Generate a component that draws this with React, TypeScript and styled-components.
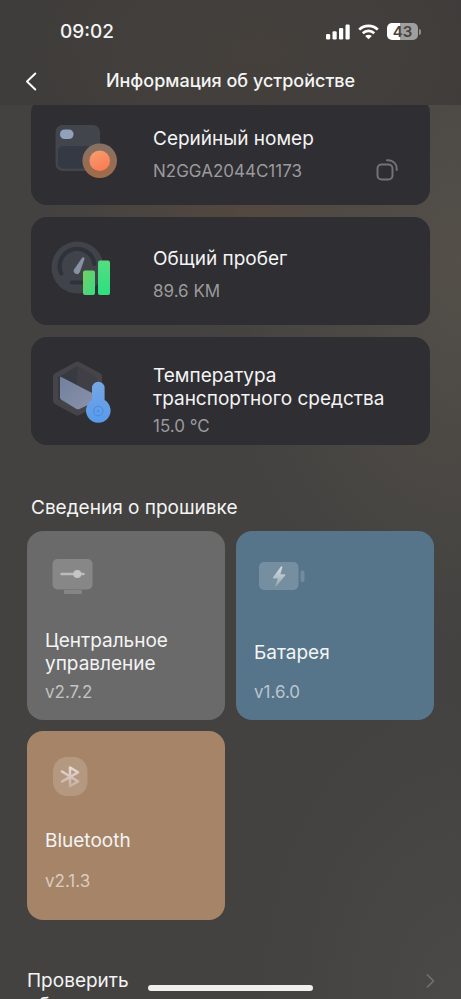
import React from "react";
import styled, { createGlobalStyle } from "styled-components";

const GlobalStyle = createGlobalStyle`
  *, *::before, *::after { box-sizing: border-box; }
  body { margin: 0; background: #434240; }
  button { font: inherit; color: inherit; background: none; border: 0; padding: 0; cursor: pointer; }
`;

const Screen = styled.div`
  position: relative;
  display: flex;
  flex-direction: column;
  height: 100vh;
  overflow: hidden;
  color: #f4f4f4;
  font-family: Inter, "Noto Sans", sans-serif;
  background:
    radial-gradient(ellipse 240px 380px at 100% 26%, #544f49 0%, rgba(84, 79, 73, 0) 100%),
    radial-gradient(ellipse 200px 130px at 55% 21%, #54483f 0%, rgba(84, 72, 63, 0) 100%),
    radial-gradient(ellipse 200px 300px at 100% 100%, #4a4947 0%, rgba(74, 73, 71, 0) 100%),
    #434240;
`;

const Header = styled.header`
  flex: none;
  padding-bottom: 4px;
  background: radial-gradient(ellipse 240px 140px at 56% 50%, #45403c 0%, #3f3d3b 100%);
`;

const StatusBar = styled.div`
  display: flex;
  align-items: center;
  justify-content: space-between;
  padding: 16px 40px 14px 60px;
`;

const Clock = styled.time`
  font-size: 19px;
  line-height: 31px;
  font-weight: 500;
`;

const StatusIcons = styled.div`
  display: flex;
  align-items: center;
  gap: 8px;
`;

const BatteryLevel = styled.div`
  display: flex;
  align-items: center;
  gap: 1px;

  &::after {
    content: "";
    width: 2px;
    height: 6px;
    border-radius: 0 2px 2px 0;
    background: #8f8e8c;
  }
`;

const BatteryBody = styled.span`
  width: 31px;
  border-radius: 5px;
  background: linear-gradient(90deg, #ffffff 43%, #a09f9d 43%);
  color: #454341;
  font-size: 15px;
  line-height: 17px;
  font-weight: 600;
  text-align: center;
`;

const NavBar = styled.nav`
  display: grid;
  grid-template-columns: 40px 1fr 40px;
  align-items: center;
  padding: 0 20px;
`;

const BackButton = styled.button`
  display: flex;
  height: 40px;
  align-items: center;
  padding-left: 5px;
`;

const PageTitle = styled.h1`
  margin: 0;
  font-size: 18px;
  line-height: 24px;
  font-weight: 500;
  text-align: center;
  white-space: nowrap;
`;

const Content = styled.main`
  flex: 1;
  min-height: 0;
  overflow-y: auto;
  scrollbar-width: none;
`;

const InfoList = styled.section`
  display: flex;
  flex-direction: column;
  gap: 12px;
  margin-top: -8px;
  padding: 0 31px;
`;

const InfoCard = styled.article`
  display: grid;
  grid-template-columns: 68px 1fr auto;
  column-gap: 34px;
  align-items: center;
  min-height: 108px;
  padding: 0 32px 0 20px;
  border-radius: 16px;
  background: #2f2e32;
`;

const InfoText = styled.div<{ $compact?: boolean }>`
  display: flex;
  flex-direction: column;
  gap: ${(p) => (p.$compact ? 4 : 9)}px;
  padding-top: ${(p) => (p.$compact ? 20 : 7)}px;
  white-space: nowrap;
`;

const InfoTitle = styled.h2`
  margin: 0;
  font-size: 19px;
  line-height: 23px;
  font-weight: 400;
`;

const InfoValue = styled.p`
  margin: 0;
  color: #9b9a9d;
  font-size: 17px;
  line-height: 24px;
`;

const CopyButton = styled.button`
  display: flex;
  padding-top: 37px;
`;

const SectionTitle = styled.h2`
  margin: 50px 31px 10px;
  font-size: 19px;
  line-height: 26px;
  font-weight: 400;
`;

const FirmwareGrid = styled.section`
  display: grid;
  grid-template-columns: 1fr 1fr;
  gap: 11px;
  padding: 0 27px;
`;

const FirmwareTile = styled.article<{ $color: string }>`
  display: flex;
  flex-direction: column;
  min-height: 189px;
  padding: 19px 18px 16px;
  border-radius: 16px;
  background: ${(p) => p.$color};
`;

const FirmwareName = styled.h3<{ $short?: boolean }>`
  display: flex;
  align-items: center;
  min-height: ${(p) => (p.$short ? 23 : 46)}px;
  margin: 27px 0 ${(p) => (p.$short ? 17 : 5)}px;
  font-size: 19px;
  line-height: 23px;
  font-weight: 400;
`;

const FirmwareVersion = styled.p`
  margin: 0;
  color: rgba(255, 255, 255, 0.6);
  font-size: 17px;
  line-height: 24px;
`;

const UpdateRow = styled.button`
  display: flex;
  width: 100%;
  align-items: flex-start;
  justify-content: space-between;
  padding: 49px 26px 40px 27px;
  font-size: 19px;
  line-height: 24px;
  text-align: left;

  span { width: 150px; }
  svg { margin-top: 5px; }
`;

const HomeIndicator = styled.div`
  position: absolute;
  bottom: 8px;
  left: 50%;
  width: 36%;
  height: 6px;
  border-radius: 3px;
  background: #f1efee;
  transform: translateX(-50%);
`;

const SignalIcon = () => (
  <svg width="24" height="16" viewBox="0 0 24 16" fill="#fff" aria-hidden="true">
    <rect x="0" y="10" width="4.2" height="5.5" rx="1.2" />
    <rect x="6.5" y="7.3" width="4.2" height="8.2" rx="1.2" />
    <rect x="13" y="4" width="4.2" height="11.5" rx="1.2" />
    <rect x="19.5" y="0.5" width="4.2" height="15" rx="1.2" />
  </svg>
);

const WifiIcon = () => (
  <svg width="21" height="16" viewBox="0 0 21 16" fill="none" stroke="#fff" strokeWidth="2.7" aria-hidden="true">
    <path d="M1.2 5.6a13.3 13.3 0 0 1 18.6 0" />
    <path d="M4.8 9.2a8.1 8.1 0 0 1 11.4 0" />
    <path d="M10.5 15.3 7.2 12a4.7 4.7 0 0 1 6.6 0Z" fill="#fff" stroke="none" />
  </svg>
);

const BackIcon = () => (
  <svg width="12" height="19" viewBox="0 0 12 19" fill="none" stroke="#fff" strokeWidth="1.9" strokeLinecap="round" strokeLinejoin="round" aria-hidden="true">
    <path d="M10.3 1.5 2 9.5l8.3 8" />
  </svg>
);

const SerialIcon = () => (
  <svg width="68" height="68" viewBox="0 0 68 68" aria-hidden="true">
    <defs>
      <linearGradient id="serialKnob" x1="0" y1="0" x2="0.4" y2="1">
        <stop offset="0" stopColor="#f5a070" />
        <stop offset="1" stopColor="#fb7d55" />
      </linearGradient>
      <linearGradient id="serialRing" x1="0" y1="0" x2="0" y2="1">
        <stop offset="0" stopColor="#857166" />
        <stop offset="1" stopColor="#a26b47" />
      </linearGradient>
    </defs>
    <rect x="4.5" y="8" width="44.5" height="46" rx="7" fill="#43454c" />
    <rect x="7" y="29" width="41" height="22.5" rx="5" fill="#343943" />
    <rect x="9" y="12.5" width="13.5" height="9.5" rx="4.5" fill="#91a0bb" />
    <circle cx="48.7" cy="43.7" r="17.3" fill="url(#serialRing)" />
    <circle cx="48.7" cy="43.7" r="10.3" fill="url(#serialKnob)" />
  </svg>
);

const MileageIcon = () => (
  <svg width="68" height="68" viewBox="0 0 68 68" aria-hidden="true">
    <defs>
      <linearGradient id="barShort" x1="0" y1="0" x2="1" y2="1">
        <stop offset="0" stopColor="#77ce63" />
        <stop offset="1" stopColor="#35dd83" />
      </linearGradient>
      <linearGradient id="barTall" x1="0" y1="0" x2="0" y2="1">
        <stop offset="0" stopColor="#55dc82" />
        <stop offset="1" stopColor="#2ce07e" />
      </linearGradient>
    </defs>
    <circle cx="26.5" cy="30.5" r="26" fill="#41434a" />
    <path d="M10.2 36.5A17.5 17.5 0 1 1 43.5 27M21 45.5h14" fill="none" stroke="#30323a" strokeWidth="4.2" strokeLinecap="round" />
    <path d="M31.3 20.6a1.4 1.4 0 0 1 2.2 1.3l-4.6 13.2a3.2 3.2 0 0 1-5.9-2.5Z" fill="#8890a3" />
    <rect x="32" y="33.5" width="12" height="24.5" rx="2" fill="url(#barShort)" />
    <rect x="47" y="23.5" width="12" height="34.5" rx="2" fill="url(#barTall)" />
  </svg>
);

const TemperatureIcon = () => (
  <svg width="68" height="68" viewBox="0 0 68 68" aria-hidden="true">
    <defs>
      <linearGradient id="boxFace" x1="0" y1="0" x2="1" y2="1">
        <stop offset="0" stopColor="#71819e" />
        <stop offset="1" stopColor="#8b91aa" />
      </linearGradient>
      <linearGradient id="thermo" x1="0" y1="0" x2="0" y2="1">
        <stop offset="0" stopColor="#77a6e4" />
        <stop offset="1" stopColor="#589aec" />
      </linearGradient>
    </defs>
    <path d="M26.5 8 47.5 19.3v24.5L26.5 55.2 5.5 43.8V19.3Z" fill="#444449" stroke="#444449" strokeWidth="7" strokeLinejoin="round" />
    <path d="M26.5 9v25L7 43.5v-23Z" fill="#383a42" />
    <path d="M26.5 9 46 20.5v22L26.5 34Z" fill="#3f3f45" />
    <path d="M9 20.8q0-1.5 1.3-.8L43 37v8L28.5 52q-1.5.7-3 0L10 42.5q-1-.8-1-2Z" fill="url(#boxFace)" />
    <path d="M41 31a6.3 6.3 0 0 1 12.6 0v12a12.3 12.3 0 1 1-12.6 0Z" fill="url(#thermo)" />
    <circle cx="47.3" cy="54" r="4.6" fill="none" stroke="#4c8fe0" strokeWidth="1.3" />
    <circle cx="47.3" cy="54" r="1.3" fill="#4c8fe0" />
  </svg>
);

const CopyIcon = () => (
  <svg width="22" height="22" viewBox="0 0 22 22" fill="none" stroke="#737276" strokeWidth="2" strokeLinecap="round" aria-hidden="true">
    <rect x="1.5" y="5.5" width="15" height="15" rx="4" />
    <path d="M11 1.2h1.5a8.2 8.2 0 0 1 8.2 8.2V11" />
  </svg>
);

const ControllerIcon = () => (
  <svg width="52" height="52" viewBox="0 0 52 52" aria-hidden="true">
    <rect x="7.5" y="9" width="40" height="30.5" rx="5" fill="#878787" />
    <rect x="19" y="40" width="18" height="4" rx="1" fill="#858585" />
    <path d="M16.5 24h22" stroke="#bcbcbc" strokeWidth="2.4" strokeLinecap="round" />
    <circle cx="32.3" cy="24" r="4" fill="#c5c5c5" />
  </svg>
);

const PowerIcon = () => (
  <svg width="52" height="52" viewBox="0 0 52 52" aria-hidden="true">
    <defs>
      <linearGradient id="bolt" x1="0" y1="0" x2="0" y2="1">
        <stop offset="0" stopColor="#d6dde1" />
        <stop offset="1" stopColor="#94a8b4" />
      </linearGradient>
    </defs>
    <rect x="5" y="12" width="39.5" height="28" rx="5" fill="#758fa0" />
    <rect x="46.5" y="20.5" width="4" height="11.5" rx="1.6" fill="#6f8b9e" />
    <path d="m27 16.5-8 10.8q-.5 1.2.7 1.2h4.1l-2.4 7.3q.6.7 1.3 0l8.4-10.3q.6-1.2-.7-1.3h-4l2-7.2q-.5-1-1.4-.5Z" fill="url(#bolt)" />
  </svg>
);

const BluetoothIcon = () => (
  <svg width="52" height="52" viewBox="0 0 52 52" fill="none" aria-hidden="true">
    <defs>
      <linearGradient id="rune" gradientUnits="userSpaceOnUse" x1="0" y1="17" x2="0" y2="37">
        <stop offset="0" stopColor="#e6dcd6" />
        <stop offset="1" stopColor="#c6ae9f" />
      </linearGradient>
    </defs>
    <rect x="8" y="7" width="34.5" height="39" rx="14" fill="#b4987f" />
    <path d="m17 21.5 16 10-8 4.8V17.5l8 4.8-16 9.4" stroke="url(#rune)" strokeWidth="2.5" strokeLinecap="round" strokeLinejoin="round" />
  </svg>
);

const ChevronIcon = () => (
  <svg width="9" height="14" viewBox="0 0 9 14" fill="none" stroke="#73716f" strokeWidth="1.7" strokeLinecap="round" strokeLinejoin="round" aria-hidden="true">
    <path d="m1.5 1 6 6-6 6" />
  </svg>
);

export default function App() {
  return (
    <Screen>
      <GlobalStyle />
      <Header>
        <StatusBar>
          <Clock>09:02</Clock>
          <StatusIcons>
            <SignalIcon />
            <WifiIcon />
            <BatteryLevel><BatteryBody>43</BatteryBody></BatteryLevel>
          </StatusIcons>
        </StatusBar>
        <NavBar>
          <BackButton aria-label="Назад"><BackIcon /></BackButton>
          <PageTitle>Информация об устройстве</PageTitle>
        </NavBar>
      </Header>
      <Content>
        <InfoList>
          <InfoCard>
            <SerialIcon />
            <InfoText>
              <InfoTitle>Серийный номер</InfoTitle>
              <InfoValue>N2GGA2044C1173</InfoValue>
            </InfoText>
            <CopyButton aria-label="Копировать"><CopyIcon /></CopyButton>
          </InfoCard>
          <InfoCard>
            <MileageIcon />
            <InfoText>
              <InfoTitle>Общий пробег</InfoTitle>
              <InfoValue>89.6 KM</InfoValue>
            </InfoText>
          </InfoCard>
          <InfoCard>
            <TemperatureIcon />
            <InfoText $compact>
              <InfoTitle>Температура<br />транспортного средства</InfoTitle>
              <InfoValue>15.0 °C</InfoValue>
            </InfoText>
          </InfoCard>
        </InfoList>
        <SectionTitle>Сведения о прошивке</SectionTitle>
        <FirmwareGrid>
          <FirmwareTile $color="#6a6a6a">
            <ControllerIcon />
            <FirmwareName>Центральное управление</FirmwareName>
            <FirmwareVersion>v2.7.2</FirmwareVersion>
          </FirmwareTile>
          <FirmwareTile $color="#56748a">
            <PowerIcon />
            <FirmwareName>Батарея</FirmwareName>
            <FirmwareVersion>v1.6.0</FirmwareVersion>
          </FirmwareTile>
          <FirmwareTile $color="#a58468">
            <BluetoothIcon />
            <FirmwareName $short>Bluetooth</FirmwareName>
            <FirmwareVersion>v2.1.3</FirmwareVersion>
          </FirmwareTile>
        </FirmwareGrid>
        <UpdateRow>
          <span>Проверить обновление</span>
          <ChevronIcon />
        </UpdateRow>
      </Content>
      <HomeIndicator />
    </Screen>
  );
}
